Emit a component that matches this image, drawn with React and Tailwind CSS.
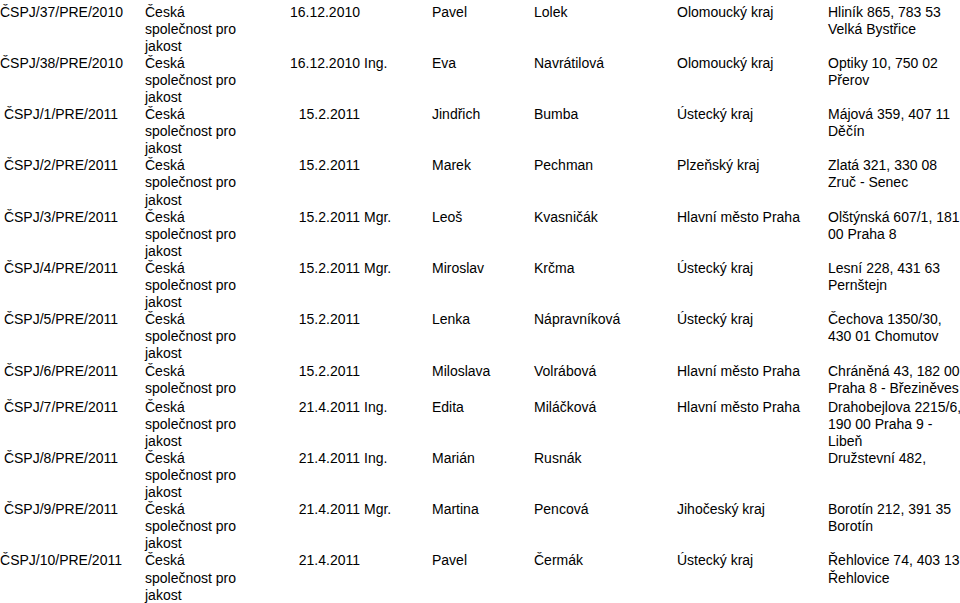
const rows = [
  { id: "ČSPJ/37/PRE/2010", date: "16.12.2010", title: "", first: "Pavel", last: "Lolek", region: "Olomoucký kraj", addr: ["Hliník 865, 783 53", "Velká Bystřice"] },
  { id: "ČSPJ/38/PRE/2010", date: "16.12.2010", title: "Ing.", first: "Eva", last: "Navrátilová", region: "Olomoucký kraj", addr: ["Optiky 10, 750 02", "Přerov"] },
  { id: "ČSPJ/1/PRE/2011", date: "15.2.2011", title: "", first: "Jindřich", last: "Bumba", region: "Ústecký kraj", addr: ["Májová 359, 407 11", "Děčín"] },
  { id: "ČSPJ/2/PRE/2011", date: "15.2.2011", title: "", first: "Marek", last: "Pechman", region: "Plzeňský kraj", addr: ["Zlatá 321, 330 08", "Zruč - Senec"] },
  { id: "ČSPJ/3/PRE/2011", date: "15.2.2011", title: "Mgr.", first: "Leoš", last: "Kvasničák", region: "Hlavní město Praha", addr: ["Olštýnská 607/1, 181", "00 Praha 8"] },
  { id: "ČSPJ/4/PRE/2011", date: "15.2.2011", title: "Mgr.", first: "Miroslav", last: "Krčma", region: "Ústecký kraj", addr: ["Lesní 228, 431 63", "Pernštejn"] },
  { id: "ČSPJ/5/PRE/2011", date: "15.2.2011", title: "", first: "Lenka", last: "Nápravníková", region: "Ústecký kraj", addr: ["Čechova 1350/30,", "430 01 Chomutov"] },
  { id: "ČSPJ/6/PRE/2011", date: "15.2.2011", title: "", first: "Miloslava", last: "Volrábová", region: "Hlavní město Praha", addr: ["Chráněná 43, 182 00", "Praha 8 - Březiněves"], short: true },
  { id: "ČSPJ/7/PRE/2011", date: "21.4.2011", title: "Ing.", first: "Edita", last: "Miláčková", region: "Hlavní město Praha", addr: ["Drahobejlova 2215/6,", "190 00 Praha 9 -", "Libeň"] },
  { id: "ČSPJ/8/PRE/2011", date: "21.4.2011", title: "Ing.", first: "Marián", last: "Rusnák", region: "", addr: ["Družstevní 482,"] },
  { id: "ČSPJ/9/PRE/2011", date: "21.4.2011", title: "Mgr.", first: "Martina", last: "Pencová", region: "Jihočeský kraj", addr: ["Borotín 212, 391 35", "Borotín"] },
  { id: "ČSPJ/10/PRE/2011", date: "21.4.2011", title: "", first: "Pavel", last: "Čermák", region: "Ústecký kraj", addr: ["Řehlovice 74, 403 13", "Řehlovice"] },
];

function Row({ r }) {
  return (
    <div className={`flex overflow-hidden ${r.short ? "h-[36px]" : "h-[51.3px]"}`}>
      <div className="w-[122px] shrink-0 text-center whitespace-nowrap">{r.id}</div>
      <div className="w-[125px] shrink-0 ml-[23px]">
        <div>Česká</div>
        <div className="whitespace-nowrap">společnost pro</div>
        {!r.short && <div>jakost</div>}
      </div>
      <div className="w-[90px] shrink-0 text-right whitespace-nowrap">{r.date}</div>
      <div className="w-[72px] shrink-0 pl-[4px]">{r.title}</div>
      <div className="w-[102px] shrink-0">{r.first}</div>
      <div className="w-[143px] shrink-0">{r.last}</div>
      <div className="w-[151px] shrink-0 whitespace-nowrap">{r.region}</div>
      <div className="w-[132px] shrink-0 whitespace-nowrap">
        {r.addr.map((line, i) => (
          <div key={i}>{line}</div>
        ))}
      </div>
    </div>
  );
}

export default function App() {
  return (
    <div
      className="w-[960px] h-[603px] overflow-hidden bg-white text-black text-[14px] leading-[17.1px] pt-[3.5px]"
      style={{ fontFamily: '"Liberation Sans", Arial, sans-serif' }}
    >
      {rows.map((r) => (
        <Row key={r.id} r={r} />
      ))}
    </div>
  );
}
